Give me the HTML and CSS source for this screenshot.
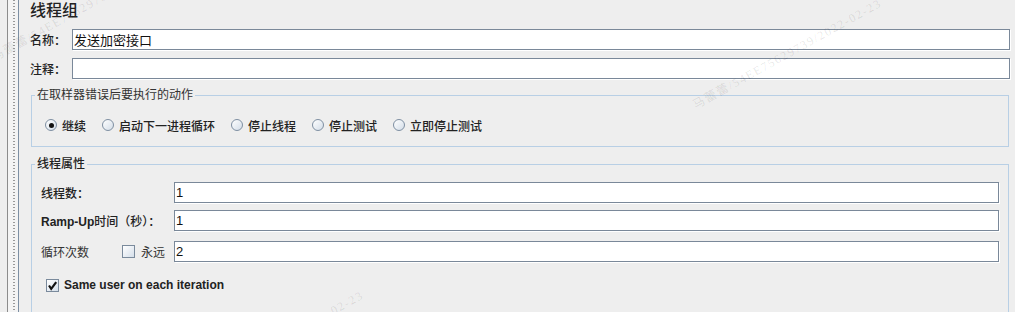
FILE: index.html
```html
<!DOCTYPE html>
<html lang="zh-CN">
<head>
    <meta charset="UTF-8">
    <title>线程组</title>
    <link rel="stylesheet" href="styles.css">
</head>
<body>
    <div class="window">
        <!-- left tree edge -->
        <div class="tree-edge">
            <span class="edge-pad"></span>
            <span class="edge-line"></span>
            <span class="edge-track"></span>
            <span class="edge-border"></span>
        </div>

        <div class="panel">
            <div class="panel-title">线程组</div>

            <div class="field-row">
                <span class="field-label">名称：</span>
                <div class="text-box">发送加密接口</div>
            </div>
            <div class="field-row">
                <span class="field-label">注释：</span>
                <div class="text-box"></div>
            </div>

            <!-- Sampler error action -->
            <fieldset class="group group-actions">
                <legend>在取样器错误后要执行的动作</legend>
                <div class="radio-row">
                    <span class="radio-option"><span class="radio checked"></span>继续</span>
                    <span class="radio-option"><span class="radio"></span>启动下一进程循环</span>
                    <span class="radio-option"><span class="radio"></span>停止线程</span>
                    <span class="radio-option"><span class="radio"></span>停止测试</span>
                    <span class="radio-option"><span class="radio"></span>立即停止测试</span>
                </div>
            </fieldset>

            <!-- Thread properties -->
            <fieldset class="group group-props">
                <legend class="legend-bold">线程属性</legend>
                <div class="props-body">
                    <div class="prop-row">
                        <span class="prop-label">线程数：</span>
                        <div class="text-box">1</div>
                    </div>
                    <div class="prop-row ramp-row">
                        <span class="prop-label"><b class="latin">Ramp-Up</b>时间（秒）：</span>
                        <div class="text-box">1</div>
                    </div>
                    <div class="prop-row loop-row">
                        <span class="loop-label">循环次数</span>
                        <span class="forever"><span class="checkbox"></span>永远</span>
                        <div class="text-box">2</div>
                    </div>
                    <div class="check-row">
                        <span class="checkbox">
                            <svg viewBox="0 0 13 13" width="13" height="13"><path d="M3 6.5 L5.2 9.8 L10.2 3.2" fill="none" stroke="#111" stroke-width="2.2"/></svg>
                        </span>
                        <b class="latin">Same user on each iteration</b>
                    </div>
                </div>
            </fieldset>
        </div>

        <!-- watermarks -->
        <span class="watermark wm-top">马蕾蕾/54EE75629739/2022-02-23</span>
        <span class="watermark wm-right">马蕾蕾/54EE75629739/2022-02-23</span>
        <span class="watermark wm-bottom">马蕾蕾/54EE75629739/2022-02-23</span>
    </div>
</body>
</html>
```

FILE: styles.css
```css
body {
    margin: 0;
    background-color: #eeeeee;
    font-family: "Liberation Sans", "Noto Sans CJK SC", sans-serif;
    font-size: 12px;
    color: #333;
    overflow: hidden;
}

.window {
    position: relative;
    display: flex;
    height: 312px;
    overflow: hidden;
}

/* Left tree edge */
.tree-edge {
    display: flex;
    flex: none;
    width: 19px;
}

.edge-pad {
    width: 7px;
}

.edge-line {
    width: 1px;
    background-color: #8c8c8c;
}

.edge-track {
    width: 10px;
    background-color: #f4f4f4;
    background-image: linear-gradient(#9a9a9a 1px, transparent 1px);
    background-size: 2px 3px;
    background-repeat: repeat-y;
    background-position: 5px 0;
}

.edge-border {
    width: 1px;
    background-color: #7d8fa3;
}

/* Panel */
.panel {
    flex: 1;
    min-width: 0;
    padding: 1px 5px 0 11px;
}

.panel-title {
    font-size: 16px;
    line-height: 20px;
    height: 20px;
    font-weight: 500;
    color: #222;
}

.field-row {
    display: flex;
    align-items: center;
    height: 21px;
    margin-top: 8px;
}

.field-label {
    width: 42px;
    flex: none;
    font-weight: 500;
    color: #222;
}

.latin {
    font-weight: bold;
}

.text-box {
    flex: 1;
    height: 21px;
    box-sizing: border-box;
    border: 1px solid #7a8899;
    background-color: #fff;
    box-shadow: 1px 1px 0 #fff;
    padding: 0 1px;
    display: flex;
    align-items: center;
    font-size: 13px;
    color: #111;
}

/* Group boxes */
.group {
    margin: 8px 1px 0 1px;
    padding: 0;
    border: 1px solid #b8cfe5;
    min-width: 0;
}

.group legend {
    margin-left: 3px;
    padding: 0 2px;
    line-height: 16px;
    font-size: 12px;
    color: #333;
}

.group .legend-bold {
    font-weight: 500;
    color: #222;
}

.group-props {
    margin-top: 9px;
}

.props-body {
    padding: 10px 9px 60px 9px;
}

/* Radios */
.radio-row {
    display: flex;
    align-items: center;
    gap: 16px;
    height: 16px;
    padding: 14px 0 13px 13px;
}

.radio-option {
    display: flex;
    align-items: center;
    gap: 5px;
    font-weight: 500;
    color: #222;
}

.radio {
    position: relative;
    width: 12px;
    height: 12px;
    box-sizing: border-box;
    border: 1px solid #7e8fa2;
    border-radius: 50%;
    background: linear-gradient(135deg, #ffffff, #d3dde8);
}

.radio.checked::after {
    content: "";
    position: absolute;
    left: 2.5px;
    top: 2.5px;
    width: 5px;
    height: 5px;
    border-radius: 50%;
    background-color: #111;
}

/* Thread properties rows */
.prop-row {
    display: flex;
    align-items: center;
    height: 21px;
}

.ramp-row {
    margin-top: 7px;
}

.loop-row {
    margin-top: 10px;
}

.prop-label {
    width: 133px;
    flex: none;
    font-weight: 500;
    color: #222;
}

.loop-label {
    width: 81px;
    flex: none;
}

.forever {
    width: 52px;
    flex: none;
    display: flex;
    align-items: center;
    gap: 6px;
}

.checkbox {
    width: 13px;
    height: 13px;
    flex: none;
    box-sizing: border-box;
    border: 1px solid #7a8a9c;
    background: linear-gradient(135deg, #ffffff, #d5dfea);
    display: flex;
    align-items: center;
    justify-content: center;
}

.checkbox svg {
    flex: none;
}

.check-row {
    display: flex;
    align-items: center;
    gap: 5px;
    height: 16px;
    margin-top: 15px;
    padding-left: 5px;
    color: #222;
}

/* Watermarks */
.watermark {
    position: absolute;
    font-family: "Liberation Serif", "Noto Sans CJK SC", serif;
    font-size: 12px;
    letter-spacing: 1.5px;
    color: rgba(0, 0, 0, 0.1);
    white-space: nowrap;
    transform: rotate(-29deg);
    transform-origin: left center;
    pointer-events: none;
}

.wm-top {
    left: -8px;
    top: 48px;
}

.wm-right {
    left: 693px;
    top: 96px;
}

.wm-bottom {
    left: 175px;
    top: 388px;
}
```
